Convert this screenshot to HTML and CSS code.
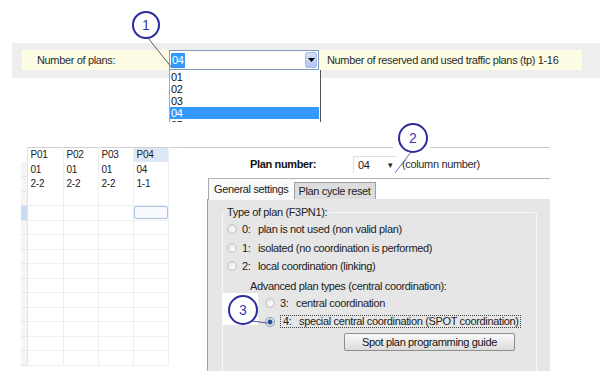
FILE: index.html
```html
<!DOCTYPE html>
<html lang="en">
  <head>
    <meta charset="UTF-8" />
    <title>Traffic plans - Plan settings</title>
    <link rel="stylesheet" href="styles.css">
  </head>
  <body>
    <div class="page">
      <section class="top">
        <div class="band">
          <div class="strip">
            <span class="lbl">Number of plans:</span>
            <div class="combo">
              <span class="combo-val"><span class="sel">04</span></span>
              <span class="combo-btn">
                <svg width="7" height="4" viewBox="0 0 7 4"><path d="M0 0h7L3.5 4z" fill="#000"/></svg>
              </span>
              <ul class="dropdown">
                <li>01</li>
                <li>02</li>
                <li>03</li>
                <li class="on">04</li>
                <li>05</li>
              </ul>
            </div>
            <span class="desc">Number of reserved and used traffic plans (tp) 1-16</span>
          </div>
        </div>
      </section>

      <section class="lower">
        <div class="grid">
          <table class="plans">
            <tr class="head"><th></th><td>P01</td><td>P02</td><td>P03</td><td class="cur">P04</td><td class="pad"></td></tr>
            <tr><th></th><td>01</td><td>01</td><td>01</td><td>04</td><td class="pad"></td></tr>
            <tr><th></th><td>2-2</td><td>2-2</td><td>2-2</td><td>1-1</td><td class="pad"></td></tr>
            <tr><th></th><td></td><td></td><td></td><td></td><td class="pad"></td></tr>
            <tr class="picked"><th></th><td></td><td></td><td></td><td><div class="cell-edit"></div></td><td class="pad"></td></tr>
            <tr><th></th><td></td><td></td><td></td><td></td><td class="pad"></td></tr>
            <tr><th></th><td></td><td></td><td></td><td></td><td class="pad"></td></tr>
            <tr><th></th><td></td><td></td><td></td><td></td><td class="pad"></td></tr>
            <tr><th></th><td></td><td></td><td></td><td></td><td class="pad"></td></tr>
            <tr><th></th><td></td><td></td><td></td><td></td><td class="pad"></td></tr>
            <tr><th></th><td></td><td></td><td></td><td></td><td class="pad"></td></tr>
            <tr><th></th><td></td><td></td><td></td><td></td><td class="pad"></td></tr>
            <tr><th></th><td></td><td></td><td></td><td></td><td class="pad"></td></tr>
            <tr><th></th><td></td><td></td><td></td><td></td><td class="pad"></td></tr>
            <tr><th></th><td></td><td></td><td></td><td></td><td class="pad"></td></tr>
          </table>
        </div>

        <div class="plan">
          <div class="plan-row">
            <span class="plan-lbl">Plan number:</span>
            <span class="plan-combo">04<span class="arrow">&#9662;</span></span>
            <span class="plan-hint">(column number)</span>
          </div>

          <div class="tabs">
            <span class="tab active">General settings</span>
            <span class="tab">Plan cycle reset</span>
          </div>

          <div class="panel">
            <fieldset class="group">
              <legend>Type of plan (F3PN1):</legend>
              <div class="opt"><span class="radio"></span><span class="num">0:</span>plan is not used (non valid plan)</div>
              <div class="opt"><span class="radio"></span><span class="num">1:</span>isolated (no coordination is performed)</div>
              <div class="opt"><span class="radio"></span><span class="num">2:</span>local coordination (linking)</div>
              <div class="sub-title">Advanced plan types (central coordination):</div>
              <div class="opt sub"><span class="radio"></span><span class="num">3:</span>central coordination</div>
              <div class="opt sub"><span class="radio checked"></span><span class="focus"><span class="num">4:</span>special central coordination (SPOT coordination)</span></div>
              <div class="btn-row"><button class="btn">Spot plan programming guide</button></div>
            </fieldset>
          </div>
        </div>
      </section>

      <svg class="notes" width="607" height="386" viewBox="0 0 607 386">
        <line x1="148" y1="38" x2="172" y2="68" stroke="#5a5a6a" stroke-width="1"/>
        <circle cx="146" cy="25" r="13" fill="#fff" stroke="#2b2b9e" stroke-width="2"/>
        <text x="146" y="30" class="note-num">1</text>

        <rect x="393" y="122" width="37" height="29" fill="#fff"/>
        <line x1="411" y1="152" x2="395" y2="173" stroke="#6a6ab8" stroke-width="1"/>
        <circle cx="413" cy="138" r="14" fill="#fff" stroke="#2b2b9e" stroke-width="2"/>
        <text x="413" y="143" class="note-num">2</text>

        <rect x="222" y="293" width="36" height="32" fill="#fff"/>
        <line x1="252" y1="321" x2="267" y2="323" stroke="#4a5a9a" stroke-width="1"/>
        <circle cx="243" cy="310" r="14" fill="#fff" stroke="#2b2b9e" stroke-width="2"/>
        <text x="243" y="315" class="note-num">3</text>
      </svg>
    </div>
  </body>
</html>
```

FILE: styles.css
```css
* {
  margin: 0;
  padding: 0;
  box-sizing: border-box;
}

body {
  background: #ffffff;
  color: #1a1a1a;
  font-family: "Liberation Sans", Arial, sans-serif;
  font-size: 11px;
  letter-spacing: -0.35px;
  width: 607px;
  height: 386px;
  overflow: hidden;
}

.page {
  position: relative;
  width: 607px;
  height: 386px;
}

/* top: number of plans */
.top {
  padding: 43px 0 0 12px;
}

.band {
  width: 588px;
  height: 35px;
  background: #eeeeee;
  padding: 7px 0 0 10px;
}

.strip {
  display: flex;
  align-items: center;
  width: 560px;
  height: 20px;
  background: #fdfde6;
}

.lbl {
  width: 147px;
  padding-left: 15px;
  color: #2a2a2a;
}

.combo {
  position: relative;
  display: flex;
  width: 150px;
  height: 20px;
  border: 1px solid #7f9db9;
  background: #fff;
}

.combo-val {
  flex: 1;
  padding: 2px 0 0 1px;
}

.sel {
  display: inline-block;
  background: #3399ff;
  color: #fff;
  padding: 1px 1px;
  line-height: 13px;
}

.combo-btn {
  display: flex;
  align-items: center;
  justify-content: center;
  width: 12px;
  margin: 1px;
  background: linear-gradient(#d2e0fb, #b3c6f2);
  border: 1px solid #a9bfea;
  border-radius: 2px;
}

.dropdown {
  position: absolute;
  top: 19px;
  left: -1px;
  width: 152px;
  height: 52px;
  overflow: hidden;
  list-style: none;
  background: #fff;
  border-left: 1px solid #a8a8a8;
  border-right: 1px solid #555;
}

.dropdown li {
  height: 12px;
  line-height: 12px;
  padding-left: 1px;
  font-size: 11px;
  color: #111;
}

.dropdown li:first-child {
  margin-top: 1px;
}

.dropdown li.on {
  background: #3399ff;
  color: #fff;
  margin-right: 1px;
}

.desc {
  margin-left: 8px;
  color: #2a2a2a;
}

/* lower part */
.lower {
  display: flex;
  margin-top: 69px;
}

.grid {
  width: 180px;
  padding-left: 21px;
}

.plans {
  border-collapse: collapse;
  table-layout: fixed;
  width: 159px;
}

.plans tr {
  height: 14.5px;
}

.plans th {
  width: 6px;
  background: #f5f5f5;
  border-bottom: 1px solid #e6e6e6;
}

.plans tr.head th {
  background: #fff;
  border-bottom: none;
}

.plans tr.picked th {
  background: #c9dcf2;
}

.plans td {
  width: 35px;
  padding: 0 0 0 3px;
  border-right: 1px solid #efefef;
  border-bottom: 1px solid #efefef;
  font-size: 10px;
  line-height: 13px;
  letter-spacing: -0.2px;
  color: #222;
  white-space: nowrap;
}

.plans tr:nth-child(-n+3) td {
  border-bottom-color: #fff;
}

.plans tr.head td {
  border-top: 1px solid #cfcfcf;
}

.plans td:nth-child(2) {
  width: 36px;
  border-left: 1px solid #e4e4e4;
}

.plans td.cur {
  background: #dce8f6;
}

.plans td.pad {
  width: 12px;
  border-right: none;
  border-bottom-color: #fff;
}

.cell-edit {
  height: 13px;
  margin-left: -3px;
  border: 1px solid #a9c3e3;
  border-radius: 2px;
  background: #f6f9fd;
}

.plan {
  width: 370px;
  border-top: 1px solid #c8c8c8;
}

.plan-row {
  display: flex;
  align-items: center;
  height: 30px;
  padding-top: 2px;
}

.plan-lbl {
  width: 173px;
  padding-left: 70px;
  font-weight: bold;
  color: #111;
}

.plan-combo {
  display: flex;
  justify-content: space-between;
  align-items: center;
  width: 44px;
  height: 17px;
  padding: 0 4px 0 4px;
  background: #fff;
  border-top: 1px solid #e0e0e0;
  border-left: 1px solid #e0e0e0;
  color: #222;
}

.arrow {
  font-size: 9px;
}

.plan-hint {
  margin-left: 5px;
  color: #2a2a2a;
}

.tabs {
  display: flex;
  height: 22px;
  margin-left: 28px;
  border-top: 1px solid #b4b4b4;
}

.tab {
  padding: 3px 5px 0 5px;
  border-left: 1px solid #a8a8a8;
  color: #222;
}

.tab.active {
  background: #fafafa;
  height: 21px;
  padding-top: 4px;
}

.tab + .tab {
  margin-top: 3px;
  height: 17px;
  padding: 2px 4px 0 4px;
  background: #dddddd;
  border: 1px solid #a0a0a0;
  border-bottom: none;
}

.panel {
  height: 172px;
  width: 343px;
  margin-left: 27px;
  margin-top: -1px;
  background: #e6e6e6;
  border-left: 1px solid #a0a0a0;
  overflow: hidden;
  padding: 7px 0 0 14px;
}

.group {
  width: 315px;
  height: 200px;
  border: 1px solid #f8f8f8;
  border-radius: 3px;
}

.group legend {
  margin-left: 3px;
  padding: 0 2px 0 1px;
  line-height: 13px;
  color: #222;
}

.opt {
  display: flex;
  align-items: center;
  height: 18.5px;
  padding-left: 4px;
  color: #222;
  white-space: nowrap;
}

.opt:first-of-type {
  margin-top: 1px;
}

.radio {
  flex: none;
  width: 10px;
  height: 10px;
  margin-right: 5px;
  border: 1px solid #c4c4c4;
  border-radius: 50%;
  background: radial-gradient(circle at 60% 60%, #fdfdfd, #d8d8d8);
}

.radio.checked {
  border-color: #8a9ab0;
  background: radial-gradient(circle, #2a4f8e 0, #2a4f8e 2px, #e8ecf2 3px, #cfd6e0 5px);
}

.num {
  display: inline-block;
  width: 16px;
}

.sub-title {
  height: 18.5px;
  line-height: 20px;
  padding-left: 27px;
  color: #222;
}

.opt.sub {
  padding-left: 42px;
}

.focus {
  padding: 0 1px 0 2px;
  border: 1px dotted #444;
  line-height: 11px;
}

.btn-row {
  padding: 2px 0 0 121px;
}

.btn {
  width: 171px;
  height: 18px;
  font-family: "Liberation Sans", Arial, sans-serif;
  font-size: 11px;
  letter-spacing: -0.35px;
  color: #111;
  background: linear-gradient(#fafafa, #dcdcdc);
  border: 1px solid #8e8e8e;
  border-radius: 2px;
}

/* annotation overlay */
.notes {
  position: absolute;
  top: 0;
  left: 0;
  pointer-events: none;
}

.note-num {
  font-family: "Liberation Sans", Arial, sans-serif;
  font-size: 14px;
  letter-spacing: 0;
  fill: #3b3bb0;
  text-anchor: middle;
}
```
